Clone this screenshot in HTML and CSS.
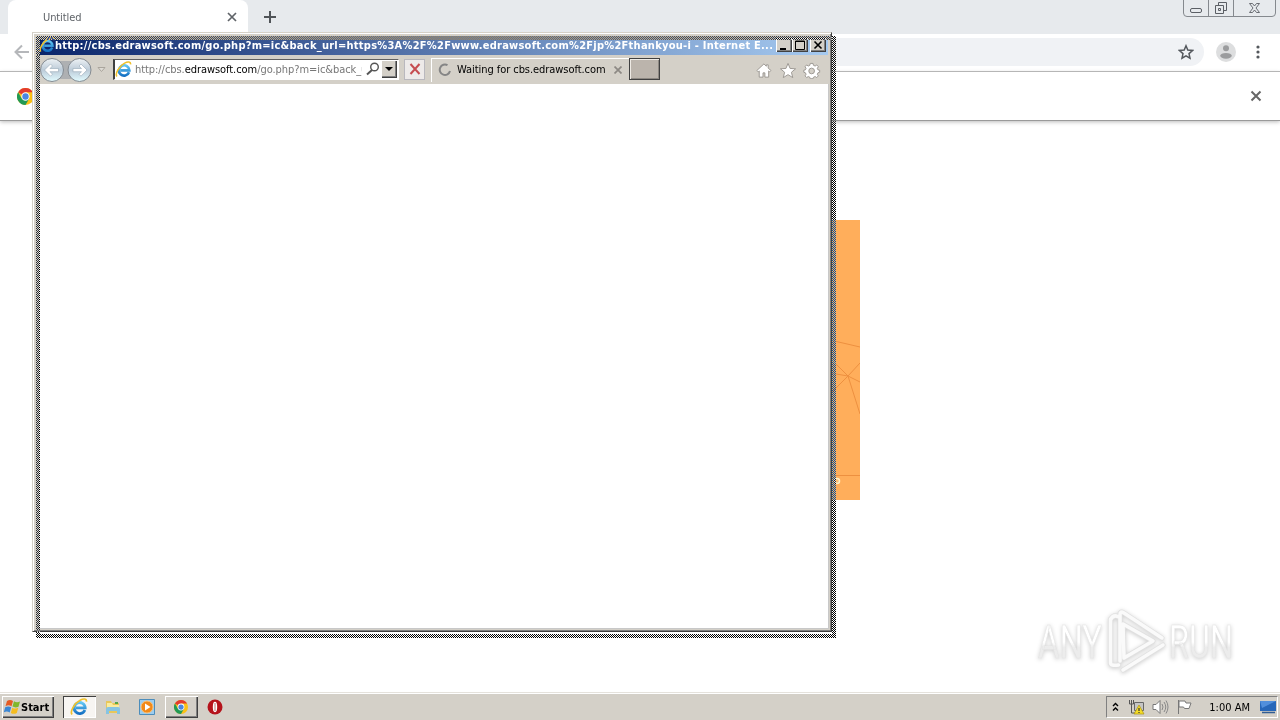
FILE: index.html
```html
<!DOCTYPE html>
<html lang="en">
<head>
    <meta charset="UTF-8">
    <title>Untitled</title>
    <link rel="stylesheet" href="styles.css">
</head>
<body>
    <svg class="defs" width="0" height="0">
        <defs>
            <linearGradient id="blue" x1="0" y1="0" x2="0" y2="1">
                <stop offset="0" stop-color="#62c7f4"/><stop offset="1" stop-color="#1672c4"/>
            </linearGradient>
            <linearGradient id="glass" x1="0" y1="0" x2="0" y2="1">
                <stop offset="0" stop-color="#eef2f5"/><stop offset=".5" stop-color="#bccbd8"/><stop offset="1" stop-color="#e2fbff"/>
            </linearGradient>
            <linearGradient id="mark" x1="0" y1="0" x2="0" y2="1">
                <stop offset=".5" stop-color="#fff"/><stop offset=".6" stop-color="#ececec"/>
            </linearGradient>
            <symbol id="ie" viewBox="0 0 16 16">
                <path d="M13.200 10.600A4.900 4.900 0 1 1 13.500 8.800H5.200" fill="none" stroke="url(#blue)" stroke-width="2.500"/>
                <path d="M1.800 14.600C-.3 12 4 4.600 9 2c3-1.700 6-1.600 5.600 1.200" fill="none" stroke="#efc02b" stroke-width="1.500"/>
            </symbol>
            <symbol id="chrome" viewBox="0 0 16 16">
                <circle cx="8" cy="8" r="8" fill="#fbc116"/>
                <path d="M8 8L1.070 4A8 8 0 0 1 14.930 4H8z" fill="#e33b2e"/>
                <path d="M1.070 4A8 8 0 0 0 8 16L11.400 10 8 8 4.500 10z" fill="#229a55"/>
                <circle cx="8" cy="8" r="3.900" fill="#fff"/>
                <circle cx="8" cy="8" r="3" fill="#4a86e0"/>
            </symbol>
        </defs>
    </svg>

    <div class="chrome">
        <div class="tabstrip">
            <div class="tab">
                <span>Untitled</span>
                <svg width="10" height="10" viewBox="0 0 10 10"><path d="M1 1l8 8M9 1l-8 8" stroke="#5f6368" stroke-width="1.700"/></svg>
            </div>
            <svg class="plus" width="12" height="12" viewBox="0 0 12 12"><path d="M6 0v12M0 6h12" stroke="#505458" stroke-width="2"/></svg>
            <svg class="caption" width="94" height="18" viewBox="0 0 94 18" fill="none" stroke="#85898e">
                <path d="M.5 0v13q0 3.500 3.500 3.500h85q3.500 0 3.500-3.500V0M25.500 0v16M50.500 0v16"/>
                <g stroke="#5b5f65">
                    <rect x="7.500" y="8.500" width="11" height="4" rx="1.500"/>
                    <path d="M35.500 5.500V2.500h8v8h-3M32.500 5.500h8v8h-8zM35.500 8.500h2v2h-2z"/>
                    <path d="M66.500 3.500h3l2 2.500 2-2.500h3l-3.500 4.500 3.500 4.500h-3l-2-2.500-2 2.500h-3L70 8z" stroke-width=".9"/>
                </g>
            </svg>
        </div>
        <div class="toolbar">
            <svg width="16" height="16" viewBox="0 0 16 16"><path d="M15 8H2M8 1.500L1.500 8 8 14.500" fill="none" stroke="#b5b7ba" stroke-width="2"/></svg>
            <div class="omnibox">
                <svg width="16" height="16" viewBox="0 0 16 16"><path d="M8 1.800l1.800 4.300 4.700.4-3.500 3.100 1 4.600L8 11.800l-4 2.400 1-4.600L1.500 6.500l4.700-.4z" fill="none" stroke="#54585d" stroke-width="1.500"/></svg>
            </div>
            <svg class="avatar" width="20" height="20" viewBox="0 0 20 20"><circle cx="10" cy="10" r="10" fill="#dddedf"/><circle cx="10" cy="6.200" r="3" fill="#9b9c9e"/><ellipse cx="10" cy="13.800" rx="5.800" ry="2.900" fill="#9b9c9e"/></svg>
            <svg class="dots" width="4" height="14" viewBox="0 0 4 14" fill="#54585d"><circle cx="2" cy="2" r="1.600"/><circle cx="2" cy="7" r="1.600"/><circle cx="2" cy="12" r="1.600"/></svg>
        </div>
        <div class="infobar">
            <svg width="17" height="17"><use href="#chrome"/></svg>
            <svg width="12" height="12" viewBox="0 0 12 12"><path d="M1.500 1.500l9 9M10.500 1.500l-9 9" stroke="#676767" stroke-width="2"/></svg>
        </div>
        <div class="page">
            <svg class="banner" width="60" height="280" viewBox="0 0 60 280">
                <path d="M0 0h60v280H0z" fill="#ffae5b"/>
                <path d="M30 120l30 7M30 138l18 18 12 6M30 153l18 3 12-13M30 174l18-18 12 38M30 255.500h30" fill="none" stroke="#ed9040"/>
                <circle cx="37" cy="261" r="2.500" fill="#ffbd72" stroke="#fff1c8" stroke-width="1.500"/>
            </svg>
        </div>
    </div>

    <div class="ie-window">
        <div class="titlebar">
            <svg width="16" height="16"><use href="#ie"/></svg>
            <span class="title">http://cbs.edrawsoft.com/go.php?m=ic&amp;back_url=https%3A%2F%2Fwww.edrawsoft.com%2Fjp%2Fthankyou-i - Internet E...</span>
            <div class="buttons">
                <svg width="16" height="14" viewBox="0 0 16 14"><path d="M4 10h6v2H4z"/></svg>
                <svg width="16" height="14" viewBox="0 0 16 14"><path d="M3.500 3h9v8.500h-9zM3 3.500h10" fill="none" stroke="#000"/></svg>
                <svg class="close" width="16" height="14" viewBox="0 0 16 14"><path d="M4.500 3.500l7 7M11.500 3.500l-7 7" stroke="#000" stroke-width="1.600"/></svg>
            </div>
        </div>
        <div class="navbar">
            <svg class="nav" width="52" height="26" viewBox="0 0 52 26">
                <path d="M12 4h28v18H12z" fill="#aeb0b2"/>
                <g fill="url(#glass)" stroke="#858b91"><circle cx="12" cy="13" r="11.500"/><circle cx="39.500" cy="13" r="11.500"/></g>
                <path d="M4.500 13l6-6 2 2-2.500 2.500h8.500v3.200H10l2.500 2.500-2 2zM47 13l-6-6-2 2 2.500 2.500H33v3.200h8.500L39 17.200l2 2z" fill="#fff" stroke="#96a8b7" stroke-width=".6"/>
            </svg>
            <svg class="drop" width="9" height="6" viewBox="0 0 9 6"><path d="M1 .5h7L4.500 4.500z" fill="#dedbd5" stroke="#aaa59d"/></svg>
            <div class="address">
                <svg width="17" height="17"><use href="#ie"/></svg>
                <span class="url">http://cbs.<b>edrawsoft.com</b>/go.php?m=ic&amp;back_u</span>
                <svg width="14" height="14" viewBox="0 0 14 14"><circle cx="8.500" cy="5" r="3.800" fill="none" stroke="#555" stroke-width="1.400"/><path d="M6 8l-5 4.500" stroke="#555" stroke-width="2"/></svg>
                <i class="combo"></i>
            </div>
            <div class="stop"><svg width="12" height="12" viewBox="0 0 12 12"><path d="M1.500 1l9 10M10.500 1l-9 10" stroke="#c64c50" stroke-width="2"/></svg></div>
            <div class="ie-tab">
                <svg width="14" height="14" viewBox="0 0 14 14"><path d="M9.500 2.200A5.200 5.200 0 1 0 12 8" fill="none" stroke="#858585" stroke-width="2"/></svg>
                <span>Waiting for cbs.edrawsoft.com</span>
                <svg class="x" width="8" height="8" viewBox="0 0 8 8"><path d="M.5.5l7 7M7.500.5l-7 7" stroke="#8d8984" stroke-width="1.700"/></svg>
            </div>
            <div class="new-tab"></div>
            <svg class="tools" width="67" height="17" viewBox="0 0 68 18" fill="#fff" stroke="#9a9690" stroke-width="1">
                <path d="M.5 9L8 2l2.500 2.500V3h2v3.500L15.500 9l-1.500 1.500-1-1V16H9v-4.500H7V16H3V9.500l-1 1z"/>
                <path d="M33.500 1.500l2.200 5.300 5.800.4-4.400 3.700 1.400 5.600-5-3.100-5 3.100 1.400-5.600-4.400-3.700 5.800-.4z"/>
                <path d="M57 1.500h3l.4 2 1.800.8 1.700-1.200 1.700 1.900-1.100 1.700.7 1.600 1.800.4v2.200l-1.800.5-.7 1.600 1.100 1.700-1.700 1.800-1.700-1.100-1.800.8-.4 1.500h-3l-.4-1.500-1.700-.8-1.700 1.100-1.700-1.800 1.100-1.700-.7-1.600-1.700-.5V8.700l1.700-.4.7-1.600-1.100-1.700 1.700-1.900 1.700 1.200 1.700-.8z"/>
                <circle cx="58.500" cy="9.500" r="3" fill="#d4d0c8"/>
            </svg>
        </div>
        <div class="content"></div>
    </div>
    <!-- outline left while the window is being dragged -->
    <div class="drag-frame"></div>

    <svg class="watermark" width="220" height="80" viewBox="0 0 220 80">
        <g font-family="Roboto, sans-serif" font-size="46" fill="url(#mark)" stroke="#e4e4e4" stroke-width=".5">
            <text x="8" y="52" textLength="64" lengthAdjust="spacingAndGlyphs">ANY</text>
            <text x="139" y="52" textLength="64" lengthAdjust="spacingAndGlyphs">RUN</text>
        </g>
        <g transform="translate(7 0)" fill="none" stroke-linejoin="round" stroke-linecap="round">
            <path d="M73.500 13.500q3-5 7-3M73.500 13v44q0 3 8 2M83 55V8.500q0-4 4-1.500l38 25M86 18l30 17-29 17zM86 64l40-25" stroke="#e1e1e1" stroke-width="5"/>
            <path d="M73.500 13.500q3-5 7-3M73.500 13v44q0 3 8 2M83 55V8.500q0-4 4-1.500l38 25M86 18l30 17-29 17zM86 64l40-25" stroke="#fafafa" stroke-width="3.500"/>
        </g>
    </svg>

    <div class="taskbar">
        <div class="start">
            <svg width="17" height="16" viewBox="0 0 17 16">
                <path d="M3 2q3-2 6 0L7.500 7.200q-3-1.800-6 0z" fill="#e65b23"/><path d="M10 2.300q3 1.800 6 .1l-1.500 5.300q-3 1.500-6-.1z" fill="#80b72c"/>
                <path d="M1.200 8.300q3-1.800 6 0L5.700 13.500q-3-1.800-6 0z" fill="#3b87d4"/><path d="M8.300 8.700q3 1.700 6 .1L12.800 14q-3 1.700-6 0z" fill="#f5bd20"/>
            </svg>
            <b>Start</b>
        </div>
        <div class="task pressed"><svg width="18" height="18"><use href="#ie"/></svg></div>
        <div class="task">
            <svg width="16" height="16" viewBox="0 0 16 16"><path d="M1 2h5l1 2h7v10H1z" fill="#e8c75b"/><path d="M2 4h5l1 2h6v4H2z" fill="#faec9f"/><path d="M1 15v-5q0-2 2-2h10q2 0 2 2v5h-3v-3H4v3z" fill="#86c4e3"/><path d="M10 3h3v2h-3z" fill="#55a64a"/></svg>
        </div>
        <div class="task">
            <svg width="16" height="16" viewBox="0 0 16 16"><path d="M.5.5h15v15H.5z" fill="#9ccdf0" stroke="#4c8dbb"/><circle cx="8" cy="8" r="6" fill="#f28918" stroke="#ffc071"/><path d="M6 4.500v7L11.500 8z" fill="#fff"/></svg>
        </div>
        <div class="task raised"><svg width="14" height="14"><use href="#chrome"/></svg></div>
        <div class="task">
            <svg width="16" height="16" viewBox="0 0 16 16"><circle cx="8" cy="8" r="7.500" fill="#b5121b"/><ellipse cx="8" cy="8" rx="2.200" ry="5.200" fill="#fff"/><path d="M8 4v8" stroke="#bd7775"/></svg>
        </div>
        <div class="tray">
            <svg width="7" height="10" viewBox="0 0 7 10"><path d="M1 4l2.500-2.500L6 4M1 8.500L3.500 6 6 8.500" fill="none" stroke="#000" stroke-width="1.400"/></svg>
            <svg class="network" width="17" height="16" viewBox="0 0 17 16"><path d="M1.500 1v4h4V1M3.500 1v13h4" fill="none" stroke="#555"/><path d="M6.500 3.500h9v8h-9z" fill="#c5c5c5" stroke="#666"/><path d="M11 6l5 9H6z" fill="#f4dc27" stroke="#aa9414" stroke-width=".7"/><path d="M11 9v3m0 1v1" stroke="#333" stroke-width="1.200"/></svg>
            <svg class="sound" width="17" height="16" viewBox="0 0 17 16"><path d="M1 5.500h3l4-4v13l-4-4H1z" fill="#fff" stroke="#777"/><path d="M10 5q2 3 0 6M12 3q3.500 5 0 10M14 1.500q4 6.500 0 13" fill="none" stroke="#888"/></svg>
            <svg class="flag" width="17" height="16" viewBox="0 0 17 16"><path d="M2.500 1v14M3 2h6l1 2h5l-2 5.500H8.500l-1-1.500H3z" fill="#fff" stroke="#777"/></svg>
            <span class="clock">1:00 AM</span>
            <svg width="16" height="14" viewBox="0 0 16 14"><path d="M0 1h16v10H0z" fill="#2767b9"/><path d="M0 1h16L2 8z" fill="#518fdc"/><path d="M2 12.500h13" stroke="#315d93" stroke-width="1.500"/></svg>
        </div>
    </div>
</body>
</html>
```
FILE: styles.css
```css
* {
    box-sizing: border-box;
}
body {
    margin: 0;
    width: 1280px;
    height: 720px;
    overflow: hidden;
    position: relative;
    display: flex;
    flex-direction: column;
    background: #fff;
    font: 11px "DejaVu Sans Condensed", "DejaVu Sans", sans-serif;
    color: #000;
}
svg {
    display: block;
    flex: none;
}
.defs {
    position: absolute;
}
.chrome {
    flex: 1;
}
.tabstrip {
    height: 34px;
    background: #e7eaed;
    display: flex;
    padding-left: 8px;
}
.tab {
    width: 240px;
    background: #fff;
    border-radius: 8px 8px 0 0;
    display: flex;
    align-items: center;
    justify-content: space-between;
    padding: 0 11px 0 35px;
    color: #5f6368;
    letter-spacing: -.1px;
}
.plus {
    margin: 11px 0 0 16px;
}
.caption {
    margin-left: auto;
    margin-right: 3px;
}
.toolbar {
    height: 38px;
    border-bottom: 1px solid #b4b4b4;
    display: flex;
    align-items: center;
    padding: 0 20px 1px 14px;
}
.omnibox {
    flex: 1;
    height: 28px;
    margin: 0 12px 0 86px;
    border-radius: 14px;
    background: #f0f2f5;
    display: flex;
    align-items: center;
    justify-content: flex-end;
    padding-right: 10px;
}
.dots {
    margin-left: 20px;
}
.infobar {
    height: 49px;
    border-bottom: 1px solid #9a9a9a;
    box-shadow: 0 1px 4px #bbb;
    display: flex;
    align-items: center;
    justify-content: space-between;
    padding: 0 18px 0 17px;
}
.page {
    padding: 99px 0 0 800px;
}

.ie-window {
    position: absolute;
    left: 32px;
    top: 32px;
    width: 800px;
    height: 600px;
    padding: 2px 3px 3px 2px;
    display: flex;
    flex-direction: column;
    background: #d4d0c8;
    border: 1px solid;
    border-color: #d4d0c8 #404040 #404040 #d4d0c8;
    box-shadow: inset 1px 1px #fff, inset -1px -1px #808080;
}
.titlebar {
    height: 19px;
    margin: 1px 0 0 1px;
    padding: 0 2px 1px 3px;
    display: flex;
    align-items: center;
    background: linear-gradient(90deg, #0a246a, #a6caf0);
    color: #fff;
    font-weight: bold;
}
.title {
    width: 720px;
    white-space: nowrap;
    letter-spacing: .255px;
}
.buttons {
    display: flex;
    margin-left: auto;
}
.buttons svg {
    background: #d4d0c8;
    box-shadow: inset 1px 1px #fff, inset -1px -1px #404040, inset -2px -2px #808080;
}
.buttons .close {
    margin-left: 2px;
}
.navbar {
    height: 28px;
    display: flex;
    align-items: center;
    padding-left: 5px;
    margin-bottom: 1px;
}
.nav {
    margin-top: 1px;
}
.drop {
    margin: 2px 7px 0 5px;
}
.address {
    width: 286px;
    height: 21px;
    border: 1px solid;
    border-color: #606060 #fff #fff #404040;
    border-left-width: 2px;
    background: #fff;
    display: flex;
    align-items: center;
    padding: 0 1px 0 0;
}
.url {
    width: 227px;
    margin: 0 4px 0 3px;
    white-space: nowrap;
    overflow: hidden;
    letter-spacing: -.06px;
    color: #777;
}
.url b {
    color: #000;
    font-weight: normal;
}
.combo {
    margin-left: auto;
    width: 16px;
    height: 18px;
    background: #d4d0c8;
    box-shadow: inset 1px 1px #fff, inset -1px -1px #404040, inset -2px -2px #808080;
    display: flex;
    align-items: center;
    justify-content: center;
}
.combo::after {
    content: "";
    border: 4px solid transparent;
    border-top-color: #000;
    border-bottom: 0;
}
.stop {
    width: 21px;
    height: 21px;
    margin-left: 5px;
    display: flex;
    align-items: center;
    justify-content: center;
    background: #edeae9;
    border: 1px solid #b9b8be;
}
.ie-tab {
    width: 198px;
    height: 24px;
    margin: 2px 0 0 6px;
    padding: 0 7px 2px 6px;
    border-top: 1px solid #fff;
    border-left: 1px solid #fff;
    display: flex;
    align-items: center;
    white-space: nowrap;
}
.ie-tab span {
    margin-left: 5px;
    letter-spacing: -.06px;
}
.ie-tab .x {
    margin-left: auto;
}
.new-tab {
    width: 31px;
    height: 22px;
    background: #bbb4ac;
    border: 1px solid #404040;
    box-shadow: inset 1px 1px #eeeae4, inset -1px -1px #8d8882;
}
.tools {
    margin: 3px 6px 0 auto;
}
.content {
    flex: 1;
    margin: 0 -1px -1px 4px;
    background: #fff;
    border: solid #c8c8c8;
    border-width: 0 1px 1px 0;
}
.drag-frame {
    position: absolute;
    left: 36px;
    top: 36px;
    width: 800px;
    height: 602px;
    background: repeating-conic-gradient(#000 0 25%, #fff 0 50%) 0 0 / 2px 2px;
    mix-blend-mode: difference;
    clip-path: polygon(evenodd, 0 0, 800px 0, 800px 602px, 0 602px, 0 0, 4px 4px, 796px 4px, 796px 598px, 4px 598px, 4px 4px);
}
.watermark {
    position: absolute;
    left: 1030px;
    top: 606px;
    filter: drop-shadow(0 1px 2px #ccc);
}
.taskbar {
    height: 28px;
    background: #d4d0c8;
    box-shadow: inset 0 1px #e5e2dc, inset 0 2px #fff;
    display: flex;
    align-items: center;
    padding: 2px 2px 0;
}
.start,
.task.raised {
    background: #d4d0c8;
    box-shadow: inset 1px 1px #fff, inset -1px -1px #404040, inset -2px -2px #808080;
}
.start {
    width: 52px;
    height: 22px;
    margin-right: 8px;
    padding-left: 2px;
    display: flex;
    align-items: center;
}
.task {
    width: 33px;
    height: 22px;
    margin-left: 1px;
    padding-right: 2px;
    display: flex;
    align-items: center;
    justify-content: center;
}
.task.pressed {
    background: #f7f5f2;
    box-shadow: inset 1px 1px #404040, inset -1px -1px #fff;
}
.tray {
    width: 172px;
    height: 22px;
    margin-left: auto;
    padding: 0 1px 0 5px;
    display: flex;
    align-items: center;
    border: 1px solid;
    border-color: #808080 #fff #fff #808080;
}
.network {
    margin-left: 9px;
}
.sound,
.flag {
    margin-left: 7px;
}
.clock {
    margin: 0 10px 0 auto;
}
```
